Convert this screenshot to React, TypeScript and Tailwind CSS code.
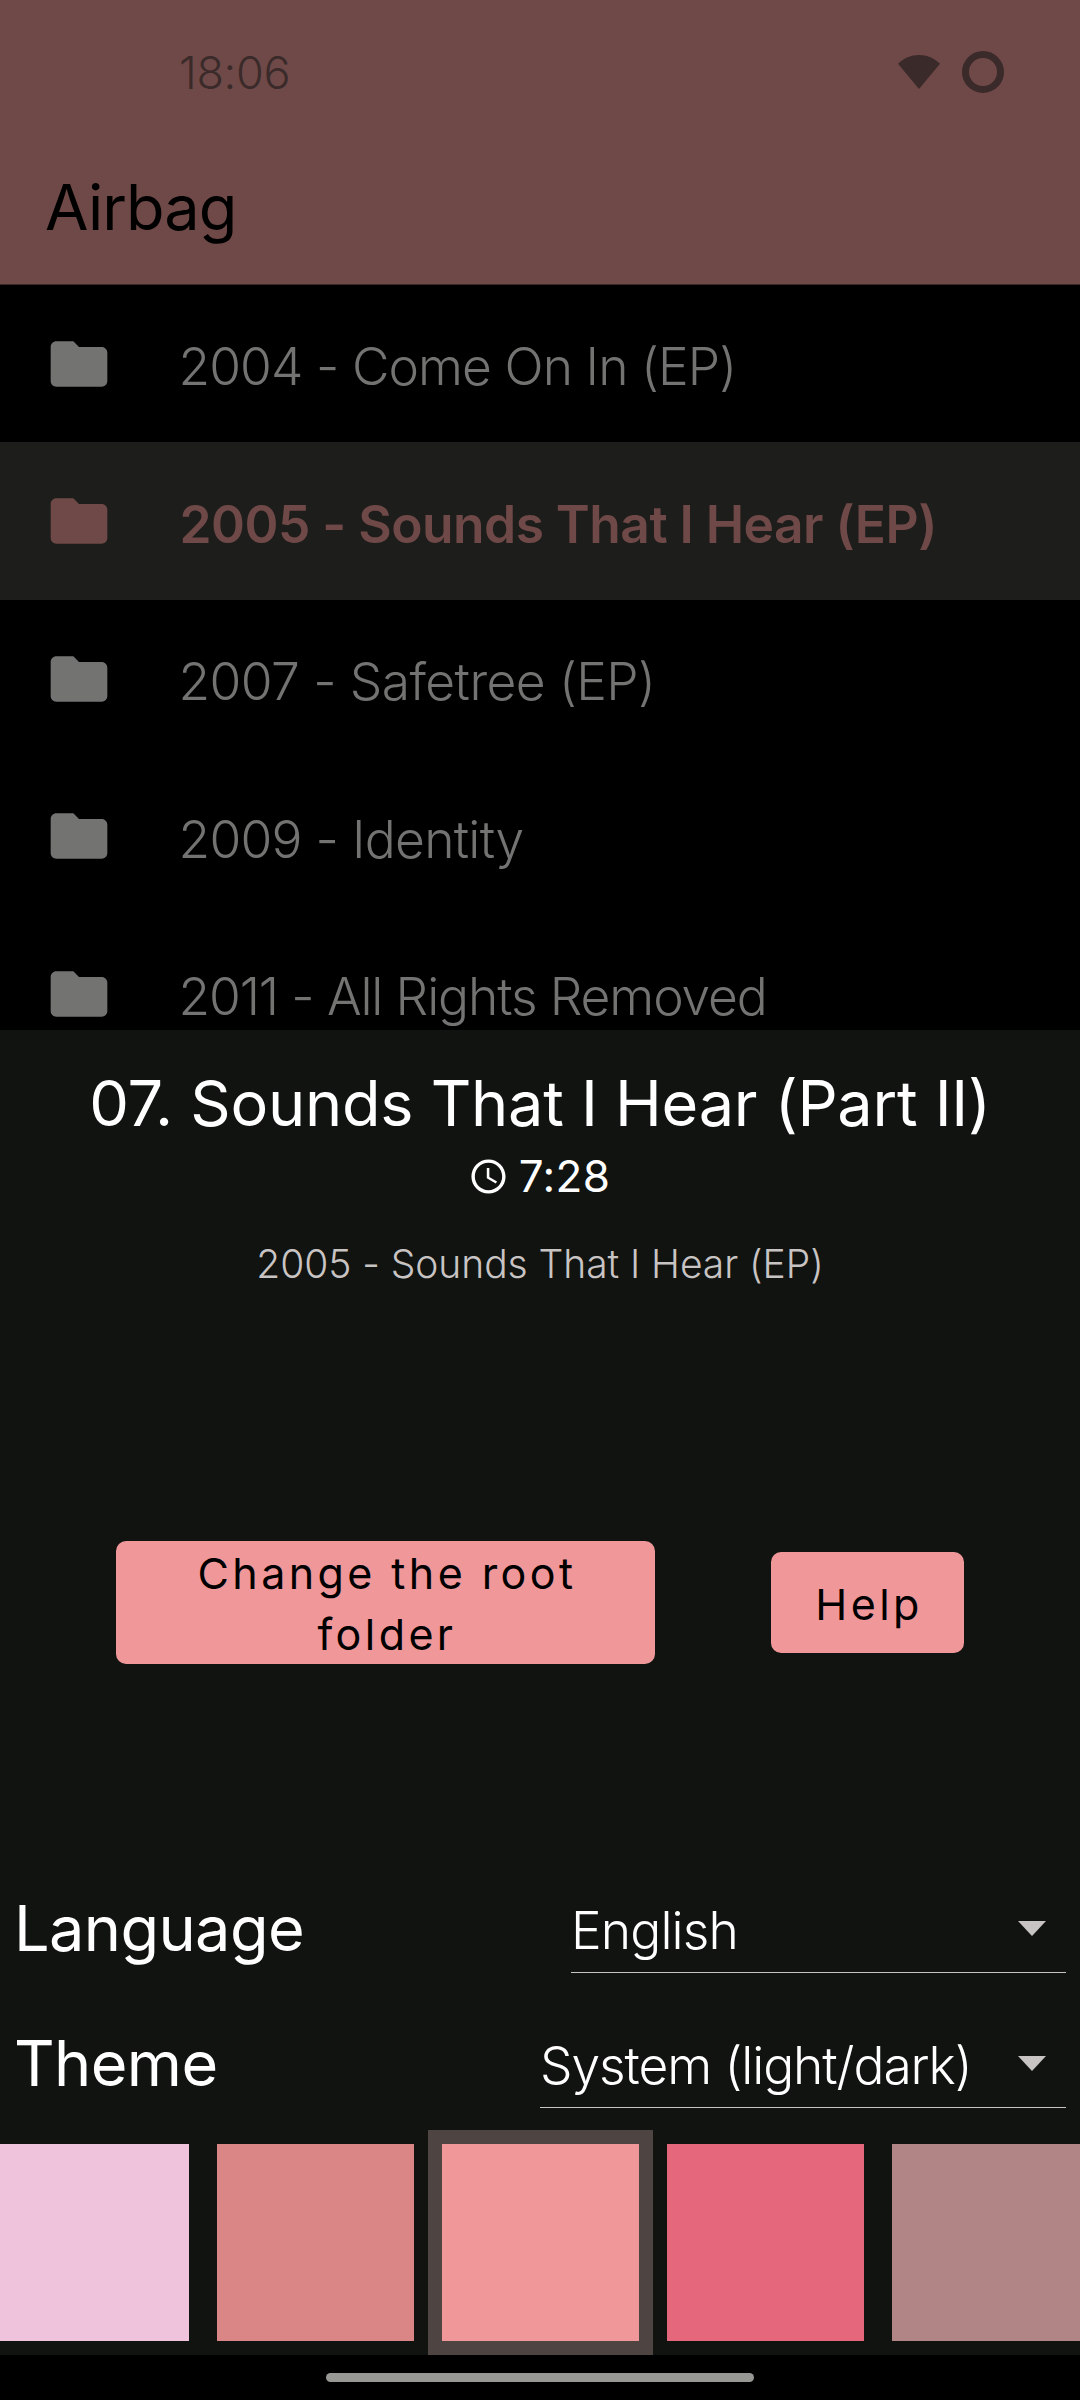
import React from "react";
import { clsx } from "clsx";

const folders = [
  { name: "2004 - Come On In (EP)", tracking: "tracking-[-0.93px]" },
  { name: "2005 - Sounds That I Hear (EP)", tracking: "tracking-[-0.52px]", active: true },
  { name: "2007 - Safetree (EP)", tracking: "tracking-[-0.58px]" },
  { name: "2009 - Identity", tracking: "tracking-[-0.72px]" },
  { name: "2011 - All Rights Removed", tracking: "tracking-[-1.12px]" },
];

const swatches = [
  { color: "bg-[#efc3db]" },
  { color: "bg-[#da8586]" },
  { color: "bg-[#f0979a]", selected: true },
  { color: "bg-[#e5677b]" },
  { color: "bg-[#b18486]" },
];

function FolderIcon() {
  return (
    <svg viewBox="0 0 24 24" className="mt-px size-[68px] shrink-0" fill="currentColor">
      <path d="M10 4H4c-1.1 0-1.99.9-1.99 2L2 18c0 1.1.9 2 2 2h16c1.1 0 2-.9 2-2V8c0-1.1-.9-2-2-2h-8l-2-2z" />
    </svg>
  );
}

function WifiIcon() {
  return (
    <svg viewBox="0 0 42 34" className="h-[34px] w-[42px]" fill="currentColor">
      <path d="M0 8.8C6 3.2 13 0 21 0s15 3.2 21 8.8L21 34z" />
    </svg>
  );
}

function ClockIcon() {
  return (
    <svg viewBox="0 0 24 24" className="mt-px size-[41px]" fill="currentColor">
      <path d="M11.99 2C6.47 2 2 6.48 2 12s4.47 10 9.99 10C17.52 22 22 17.52 22 12S17.52 2 11.99 2zM12 20c-4.42 0-8-3.58-8-8s3.58-8 8-8 8 3.58 8 8-3.58 8-8 8zm.5-13H11v6l5.25 3.15.75-1.23-4.5-2.67z" />
    </svg>
  );
}

function SettingRow({ label, value, width, tracking }: { label: string; value: string; width: string; tracking: string }) {
  return (
    <div className="flex h-[135px] items-end justify-between pr-[14px] pb-[22px] pl-[14px]">
      <div className="h-[90px] text-[63px] leading-[91px] tracking-[-0.6px]">{label}</div>
      <div className={clsx("flex h-[85px] items-center justify-between border-b border-[#c9c4c4] pr-[20px]", width)}>
        <span className={clsx("text-[51.5px] leading-[84px] font-light whitespace-nowrap", tracking)}>{value}</span>
        <svg viewBox="0 0 28 15" className="-mt-[3px] h-[15px] w-[28px]" fill="#c9c4c4">
          <path d="M0 0h28L14 15z" />
        </svg>
      </div>
    </div>
  );
}

export default function App() {
  return (
    <div className="flex h-[2400px] w-[1080px] flex-col overflow-hidden bg-black font-['Inter',sans-serif]">
      <header className="h-[285px] shrink-0 border-b border-[#3a2a2a] bg-[#6f4947]">
        <div className="flex h-[144px] items-center justify-between pr-[76px] pl-[179px] text-[#3a2a2a]">
          <span className="pt-px text-[45px] leading-none font-light tracking-[-0.3px]">18:06</span>
          <div className="flex items-center gap-[22px]">
            <WifiIcon />
            <div className="size-[42px] rounded-full border-[7px] border-[#3a2a2a]" />
          </div>
        </div>
        <h1 className="pt-px pl-[45px] text-[63px] leading-[124px] tracking-[-0.9px] text-black">Airbag</h1>
      </header>

      <main className="-mt-[0.5px] h-[745px] shrink-0 overflow-hidden">
        {folders.map((f) => (
          <div
            key={f.name}
            className={clsx(
              "flex h-[157.5px] items-center gap-[66px] pl-[44.5px]",
              f.active ? "bg-[#1d1d1b] text-[#6f4947]" : "text-[#737371]",
            )}
          >
            <FolderIcon />
            <span
              className={clsx(
                "pt-[7px] text-[51.5px] leading-none whitespace-nowrap",
                f.active ? "pl-px font-semibold" : "font-light",
                f.tracking,
              )}
            >
              {f.name}
            </span>
          </div>
        ))}
      </main>

      <section className="h-[1325.5px] shrink-0 bg-[#111310] pt-[34px] text-white">
        <h2 className="text-center text-[63px] leading-[78px] tracking-[-0.27px] whitespace-nowrap">
          07. Sounds That I Hear (Part II)
        </h2>
        <div className="flex h-[68px] items-center justify-center gap-[10px] pr-[2px]">
          <ClockIcon />
          <span className="pt-px text-[44px] leading-none tracking-[0.4px]">7:28</span>
        </div>
        <p className="text-center text-[39px] leading-[108px] font-light tracking-[-0.06px] text-[#c9c4c4]">
          2005 - Sounds That I Hear (EP)
        </p>

        <div className="mt-[223px] flex h-[123px] items-center gap-[116px] pl-[116px] text-[43px] leading-[61px] tracking-[3.42px] text-black">
          <button className="flex h-[123px] w-[539px] items-center justify-center rounded-[10px] bg-[#f0979a] px-[60px] pt-[3px] pl-[63px]">
            Change the root folder
          </button>
          <button className="mt-px flex h-[101px] w-[193px] items-center justify-center rounded-[10px] bg-[#f0979a] pt-[3px] pl-[3px]">
            Help
          </button>
        </div>

        <div className="mt-[196px]">
          <SettingRow label="Language" value="English" width="w-[495px]" tracking="tracking-[-0.85px]" />
          <SettingRow label="Theme" value="System (light/dark)" width="w-[526px]" tracking="tracking-[-1.08px]" />
        </div>

        <div className="-ml-[22px] flex h-[225px] w-[1125px]">
          {swatches.map((s) => (
            <div key={s.color} className={clsx("size-[225px] shrink-0 p-[14px]", s.selected && "bg-[#4e4441]")}>
              <div className={clsx("size-full", s.color)} />
            </div>
          ))}
        </div>
      </section>

      <footer className="flex h-[45px] shrink-0 justify-center bg-black pt-[18px]">
        <div className="h-[9px] w-[428px] rounded-full bg-[#979793]" />
      </footer>
    </div>
  );
}
